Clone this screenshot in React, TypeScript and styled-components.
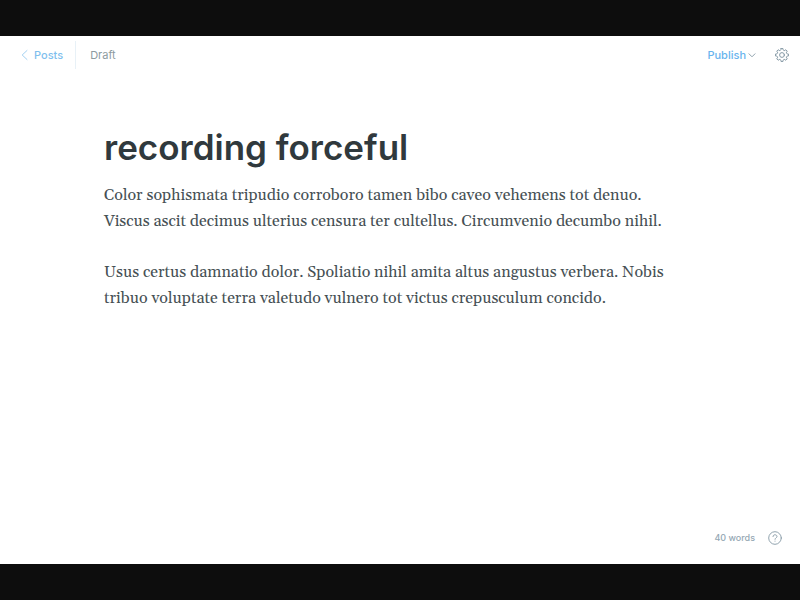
import React from "react";
import styled, { createGlobalStyle } from "styled-components";

const GlobalStyle = createGlobalStyle`
  *, *::before, *::after { box-sizing: border-box; }
  body { margin: 0; background: #0d0d0d; }
`;

const Frame = styled.div`
  display: flex;
  flex-direction: column;
  min-height: 100vh;
  padding: 36px 0;
  background: #0d0d0d;
  font-family: Inter, "Liberation Sans", sans-serif;
`;

const Editor = styled.div`
  flex: 1;
  display: flex;
  flex-direction: column;
  background: #fff;
`;

const Toolbar = styled.header`
  display: flex;
  justify-content: space-between;
  align-items: center;
  padding: 5px 11px 0 21px;
`;

const Group = styled.div<{ $gap: number }>`
  display: flex;
  align-items: center;
  gap: ${(p) => p.$gap}px;
`;

const BackLink = styled.a`
  display: flex;
  align-items: center;
  gap: 5px;
  height: 28px;
  padding-right: 12px;
  border-right: 1px solid #e8f1f7;
  color: #7fbfee;
  font-size: 11px;
  font-weight: 500;
  line-height: 16px;
  text-decoration: none;
`;

const Status = styled.span`
  color: #8d9ba1;
  font-size: 11px;
  line-height: 16px;
`;

const PlainButton = styled.button`
  display: flex;
  align-items: center;
  gap: 2px;
  padding: 0;
  border: 0;
  background: none;
  color: #68b4ee;
  font: 500 11px/16px Inter, "Liberation Sans", sans-serif;
  cursor: pointer;
`;

const Icon = styled.svg`
  display: block;
  fill: none;
  stroke: #8599a5;
  stroke-linecap: round;
  stroke-linejoin: round;
`;

const BackIcon = styled(Icon)`
  stroke: #8ac4ee;
`;

const Canvas = styled.main`
  flex: 1;
  padding: 54px 116px 24px 104px;
`;

const Title = styled.input`
  display: block;
  width: 100%;
  height: 48px;
  margin: 0 0 11px;
  padding: 0;
  border: 0;
  outline: 0;
  background: none;
  color: #30393d;
  font: 600 35px/48px Inter, "Liberation Sans", sans-serif;
`;

const Body = styled.div`
  display: flex;
  flex-direction: column;
  gap: 25px;
  outline: 0;
  color: #465054;
  font: 16px/26px Georgia, Gelasio, "Liberation Serif", serif;
`;

const Paragraph = styled.p`
  margin: 0;
`;

const Footer = styled.footer`
  display: flex;
  justify-content: flex-end;
  align-items: center;
  gap: 13px;
  padding: 0 18px 18px;
`;

const WordCount = styled.span`
  color: #95a8b4;
  font-size: 9px;
  font-weight: 500;
  line-height: 16px;
`;

const toothPoint = (angle: number, radius: number) => {
  const a = (angle * Math.PI) / 180;
  return `${(7 + radius * Math.sin(a)).toFixed(2)} ${(7 - radius * Math.cos(a)).toFixed(2)}`;
};

const gearPath =
  Array.from({ length: 8 }, (_, i) => {
    const a = i * 45;
    return `${i ? "L" : "M"}${toothPoint(a - 9, 6.5)}L${toothPoint(a + 9, 6.5)}L${toothPoint(
      a + 13,
      5.3
    )}Q${toothPoint(a + 22.5, 4.3)} ${toothPoint(a + 32, 5.3)}`;
  }).join("") + "Z";

const paragraphs = [
  "Color sophismata tripudio corroboro tamen bibo caveo vehemens tot denuo. Viscus ascit decimus ulterius censura ter cultellus. Circumvenio decumbo nihil.",
  "Usus certus damnatio dolor. Spoliatio nihil amita altus angustus verbera. Nobis tribuo voluptate terra valetudo vulnero tot victus crepusculum concido.",
];

export default function App() {
  return (
    <Frame>
      <GlobalStyle />
      <Editor>
        <Toolbar>
          <Group $gap={14}>
            <BackLink href="#posts">
              <BackIcon width="8" height="12" viewBox="0 0 8 12" aria-hidden="true">
                <path d="M6 1.5 1.2 6 6 10.5" strokeWidth="0.8" />
              </BackIcon>
              Posts
            </BackLink>
            <Status>Draft</Status>
          </Group>
          <Group $gap={19}>
            <PlainButton type="button">
              Publish
              <Icon width="8" height="8" viewBox="0 0 8 8" aria-hidden="true">
                <path d="M1 2.8 4 5.8 7 2.8" strokeWidth="0.9" />
              </Icon>
            </PlainButton>
            <PlainButton type="button" aria-label="Settings">
              <Icon width="14" height="14" viewBox="0 0 14 14" aria-hidden="true">
                <path d={gearPath} strokeWidth="1" />
                <circle cx="7" cy="7" r="2.4" strokeWidth="1" />
              </Icon>
            </PlainButton>
          </Group>
        </Toolbar>
        <Canvas>
          <Title aria-label="Post title" defaultValue="recording forceful" />
          <Body contentEditable suppressContentEditableWarning role="textbox" aria-multiline="true" aria-label="Post content" spellCheck={false}>
            {paragraphs.map((text) => (
              <Paragraph key={text}>{text}</Paragraph>
            ))}
          </Body>
        </Canvas>
        <Footer>
          <WordCount>40 words</WordCount>
          <PlainButton type="button" aria-label="Help">
            <Icon width="14" height="14" viewBox="0 0 14 14" aria-hidden="true">
              <circle cx="7" cy="7" r="6.3" strokeWidth="0.9" />
              <path d="M5 5.6C5 4.4 5.8 3.8 7 3.8S9 4.5 9 5.5C9 6.7 7 6.9 7 8.3" strokeWidth="0.9" />
              <path d="M7 10.1V10.2" strokeWidth="0.9" />
            </Icon>
          </PlainButton>
        </Footer>
      </Editor>
    </Frame>
  );
}
